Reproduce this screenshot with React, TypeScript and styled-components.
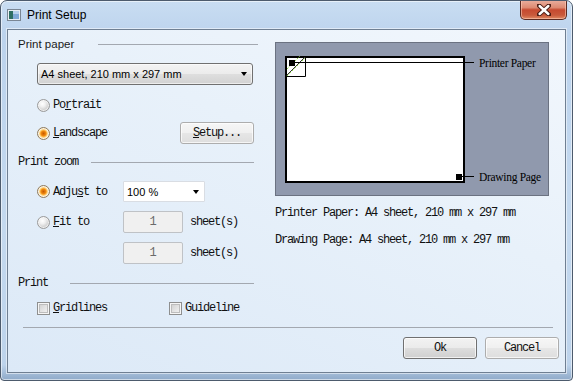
import React from 'react';
import styled, { createGlobalStyle } from 'styled-components';

const MONO = `"Liberation Mono", "DejaVu Sans Mono", monospace`;
const SANS = `"Liberation Sans", Arial, sans-serif`;

const Global = createGlobalStyle`
  html, body { margin: 0; padding: 0; background: #ffffff; }
  body { width: 573px; height: 381px; overflow: hidden; }
`;

const Window = styled.div`
  width: 573px;
  height: 381px;
  box-sizing: border-box;
  border: 1px solid #4d5b6d;
  border-radius: 7px 7px 4px 4px;
  background: linear-gradient(180deg, #c9ddf2 0%, #bcd3ed 9%, #c4d9ef 60%, #bdd3eb 96%, #8ea9c8 100%);
  display: flex;
  flex-direction: column;
  overflow: hidden;
  box-shadow: inset 0 0 0 1px rgba(255, 255, 255, 0.55);
`;

const TitleBar = styled.div`
  height: 28px;
  display: flex;
  align-items: flex-start;
  padding: 0 5px 0 6px;
  flex: none;
`;

const TitleIcon = styled.svg`
  margin-top: 8px;
  flex: none;
`;

const TitleText = styled.span`
  margin: 7px 0 0 6px;
  font: 12px ${SANS};
  color: #000;
  line-height: 14px;
`;

const CloseButton = styled.div`
  margin-left: auto;
  margin-top: -1px;
  width: 47px;
  height: 20px;
  box-sizing: border-box;
  border: 1px solid #5a2a22;
  border-top: none;
  border-radius: 0 0 5px 5px;
  background: linear-gradient(180deg, #eab0a0 0%, #dd8a72 40%, #c64a30 52%, #c95a3c 80%, #e08a64 100%);
  box-shadow: inset 0 0 0 1px rgba(255, 210, 190, 0.55);
  display: flex;
  align-items: center;
  justify-content: center;
`;

const Client = styled.div`
  flex: 1;
  margin: 0 6px 7px 6px;
  border: 1px solid #6f7f92;
  background: linear-gradient(205deg, #f2f7fd 0%, #e8f1fa 40%, #dce9f7 100%);
  display: flex;
  flex-direction: column;
  box-shadow: 0 0 0 1px rgba(255, 255, 255, 0.5);
`;

const Main = styled.div`
  flex: 1;
  display: grid;
  grid-template-columns: 240px 274px;
  column-gap: 17px;
  padding: 7px 0 0 10px;
  align-items: start;
`;

const Column = styled.div`
  display: flex;
  flex-direction: column;
`;

const Header = styled.div<{ $labelWidth: number; $right?: number; $top?: number }>`
  display: flex;
  align-items: center;
  height: 14px;
  margin-top: ${(p) => p.$top ?? 0}px;
  padding-right: ${(p) => p.$right ?? 0}px;
  & > span {
    width: ${(p) => p.$labelWidth}px;
    flex: none;
  }
  &::after {
    content: '';
    flex: 1;
    height: 1px;
    background: #a3a8b0;
  }
`;

const SansLabel = styled.span`
  font: 11.5px ${SANS};
  color: #1a1a1a;
  line-height: 14px;
`;

const MonoText = styled.span`
  font: 12px ${MONO};
  letter-spacing: -1.2px;
  color: #111;
  line-height: 14px;
  white-space: pre;
`;

const Combo = styled.div<{ $white?: boolean; $width: number; $height: number }>`
  width: ${(p) => p.$width}px;
  height: ${(p) => p.$height}px;
  box-sizing: border-box;
  border: 1px solid ${(p) => (p.$white ? '#d9dde3' : '#707070')};
  border-radius: ${(p) => (p.$white ? 1 : 3)}px;
  background: ${(p) =>
    p.$white ? '#ffffff' : 'linear-gradient(180deg, #f3f3f3 0%, #ececec 48%, #dedede 52%, #d2d2d2 100%)'};
  box-shadow: ${(p) => (p.$white ? 'none' : 'inset 0 0 0 1px rgba(255,255,255,0.6)')};
  display: flex;
  align-items: center;
  padding: 0 5px 0 3px;
  font: 11px ${SANS};
  color: #000;
  &::after {
    content: '';
    margin-left: auto;
    border-left: 3.5px solid transparent;
    border-right: 3.5px solid transparent;
    border-top: 4px solid #000;
  }
`;

const PaperCombo = styled(Combo)`
  margin: 12px 0 0 19px;
`;

const ZoomCombo = styled(Combo)`
  grid-column: span 2;
`;

const RadioRow = styled.div<{ $top: number }>`
  display: flex;
  align-items: center;
  margin: ${(p) => p.$top}px 0 0 19px;
  height: 14px;
`;

const LandscapeRow = styled.div`
  display: grid;
  grid-template-columns: 143px auto;
  align-items: center;
  margin: 10px 0 0 19px;
`;

const OptionLabel = styled.label`
  display: flex;
  align-items: center;
  gap: 3px;
`;

const Radio = styled.span<{ $checked?: boolean }>`
  width: 13px;
  height: 13px;
  box-sizing: border-box;
  border-radius: 50%;
  border: 1px solid ${(p) => (p.$checked ? '#8d7a5c' : '#9a9a9a')};
  background: ${(p) =>
    p.$checked
      ? 'radial-gradient(circle at 50% 50%, #c75a00 0, #f08a10 2.5px, #ffc45a 3.5px, #fbe2b0 4.5px, #f5e8d4 6px)'
      : 'radial-gradient(circle at 40% 35%, #ffffff 0, #f0f0f0 3px, #d2d2d2 6px)'};
  box-shadow: inset 0 0 0 1px rgba(255, 255, 255, 0.6);
  flex: none;
`;

const Check = styled.span`
  width: 13px;
  height: 13px;
  box-sizing: border-box;
  border: 1px solid #8e8f8f;
  background: linear-gradient(135deg, #cbcbcb 0%, #e6e6e6 60%, #f7f7f7 100%);
  box-shadow: inset 0 0 0 1px #f5f5f5, inset 0 0 0 2px #bdbdbd;
  flex: none;
`;

const Button = styled.button<{ $default?: boolean }>`
  width: 74px;
  height: 22px;
  box-sizing: border-box;
  border: 1px solid ${(p) => (p.$default ? '#707070' : '#adadad')};
  border-radius: 3px;
  background: ${(p) =>
    p.$default
      ? 'linear-gradient(180deg, #f2f2f2 0%, #ebebeb 48%, #dddddd 52%, #cfcfcf 100%)'
      : 'linear-gradient(180deg, #f6f6f6 0%, #f0f0f0 48%, #e6e6e6 52%, #dedede 100%)'};
  box-shadow: inset 0 0 0 1px rgba(255, 255, 255, 0.7);
  padding: 0;
  font: 12px ${MONO};
  letter-spacing: -1.2px;
  color: #111;
  display: flex;
  align-items: center;
  justify-content: center;
`;

const ZoomGrid = styled.div`
  display: grid;
  grid-template-columns: 86px 60px auto;
  justify-content: start;
  align-items: center;
  margin: 12px 0 0 19px;
  row-gap: 9px;
`;

const NumberBox = styled.div`
  width: 60px;
  height: 22px;
  box-sizing: border-box;
  border: 1px solid #bfc2c6;
  border-radius: 2px;
  background: #f0f0f0;
  display: flex;
  align-items: center;
  justify-content: center;
  font: 12px ${MONO};
  color: #6a6a6a;
`;

const Suffix = styled(MonoText)`
  margin-left: 7px;
`;

const CheckRow = styled.div`
  display: grid;
  grid-template-columns: 132px auto;
  justify-content: start;
  margin: 11px 0 0 19px;
`;

const Preview = styled.div`
  margin-top: 5px;
  width: 274px;
  height: 154px;
  box-sizing: border-box;
  border: 1px solid #6b7281;
  background: #9099ad;
  display: flex;
`;

const InfoLine = styled(MonoText)<{ $top: number }>`
  display: block;
  margin-top: ${(p) => p.$top}px;
`;

const Footer = styled.div`
  flex: none;
  display: flex;
  flex-direction: column;
  padding: 0 6px 13px 15px;
`;

const Separator = styled.div`
  height: 1px;
  background: #a3a8b0;
  margin-right: 6px;
`;

const ButtonRow = styled.div`
  display: flex;
  justify-content: flex-end;
  gap: 8px;
  margin-top: 9px;
`;

export default function App() {
  return (
    <>
      <Global />
      <Window>
        <TitleBar>
          <TitleIcon width="14" height="12" viewBox="0 0 14 12">
            <rect x="0.5" y="0.5" width="13" height="11" fill="#e8eef4" stroke="#7a8694" />
            <rect x="2" y="2" width="4" height="8" fill="#2e6f63" />
            <rect x="6" y="2" width="6" height="8" fill="#7fa9d6" />
            <rect x="6" y="2" width="6" height="3" fill="#b6d0ec" />
          </TitleIcon>
          <TitleText>Print Setup</TitleText>
          <CloseButton>
            <svg width="14" height="12" viewBox="0 0 14 12">
              <path d="M2 1.5 L12 10.5 M12 1.5 L2 10.5" stroke="#4a1c14" strokeWidth="4.4" strokeLinecap="round" />
              <path d="M2.6 2 L11.4 10 M11.4 2 L2.6 10" stroke="#ffffff" strokeWidth="2.4" strokeLinecap="round" />
            </svg>
          </CloseButton>
        </TitleBar>
        <Client>
          <Main>
            <Column>
              <Header $labelWidth={80}>
                <SansLabel>Print paper</SansLabel>
              </Header>
              <PaperCombo $width={216} $height={22}>A4 sheet, 210 mm x 297 mm</PaperCombo>
              <RadioRow $top={13}>
                <OptionLabel>
                  <Radio />
                  <MonoText>
                    Po<u>r</u>trait
                  </MonoText>
                </OptionLabel>
              </RadioRow>
              <LandscapeRow>
                <OptionLabel>
                  <Radio $checked />
                  <MonoText>
                    <u>L</u>andscape
                  </MonoText>
                </OptionLabel>
                <Button>
                  <u>S</u>etup...
                </Button>
              </LandscapeRow>
              <Header $labelWidth={73} $right={4} $top={11}>
                <MonoText>Print zoom</MonoText>
              </Header>
              <ZoomGrid>
                <OptionLabel>
                  <Radio $checked />
                  <MonoText>
                    Adju<u>s</u>t to
                  </MonoText>
                </OptionLabel>
                <ZoomCombo $white $width={82} $height={21}>
                  100 %
                </ZoomCombo>
                <OptionLabel>
                  <Radio />
                  <MonoText>
                    <u>F</u>it to
                  </MonoText>
                </OptionLabel>
                <NumberBox>1</NumberBox>
                <Suffix>sheet(s)</Suffix>
                <span />
                <NumberBox>1</NumberBox>
                <Suffix>sheet(s)</Suffix>
              </ZoomGrid>
              <Header $labelWidth={52} $right={4} $top={12}>
                <MonoText>Print</MonoText>
              </Header>
              <CheckRow>
                <OptionLabel>
                  <Check />
                  <MonoText>
                    <u>G</u>ridlines
                  </MonoText>
                </OptionLabel>
                <OptionLabel>
                  <Check />
                  <MonoText>Guideline</MonoText>
                </OptionLabel>
              </CheckRow>
            </Column>
            <Column>
              <Preview>
                <svg width="272" height="152" viewBox="0 0 272 152">
                  <rect x="10" y="14" width="178" height="125" fill="#ffffff" stroke="#000" strokeWidth="2" />
                  <path d="M11 26 L24 13 M11 33 L29 15" stroke="#8fd14a" strokeWidth="1" strokeDasharray="2 1.5" />
                  <path d="M10.5 32.5 L29 14" stroke="#333" strokeWidth="1" />
                  <path d="M29.5 13 V33.5 H10" stroke="#000" strokeWidth="1" fill="none" />
                  <rect x="13" y="17" width="6" height="6" fill="#000" />
                  <path d="M19 19.5 H198" stroke="#000" strokeWidth="1" />
                  <text x="203" y="23.5" fontFamily="Liberation Serif, serif" fontSize="11.5" letterSpacing="-0.3" fill="#000">
                    Printer Paper
                  </text>
                  <rect x="180" y="131" width="6" height="6" fill="#000" />
                  <path d="M186 133.5 H198" stroke="#000" strokeWidth="1" />
                  <text x="203" y="137.5" fontFamily="Liberation Serif, serif" fontSize="11.5" letterSpacing="-0.3" fill="#000">
                    Drawing Page
                  </text>
                </svg>
              </Preview>
              <InfoLine $top={10}>Printer Paper: A4 sheet, 210 mm x 297 mm</InfoLine>
              <InfoLine $top={13}>Drawing Page: A4 sheet, 210 mm x 297 mm</InfoLine>
            </Column>
          </Main>
          <Footer>
            <Separator />
            <ButtonRow>
              <Button $default>Ok</Button>
              <Button>Cancel</Button>
            </ButtonRow>
          </Footer>
        </Client>
      </Window>
    </>
  );
}
